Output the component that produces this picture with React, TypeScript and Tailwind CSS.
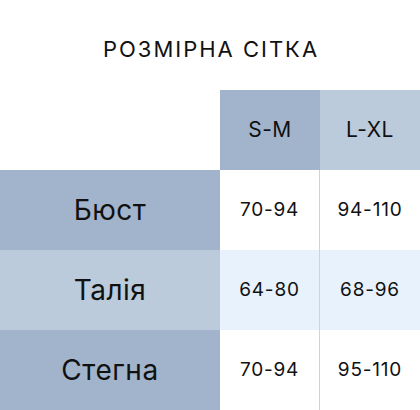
const rows = [
  { label: "Бюст", sm: "70-94", lxl: "94-110", tint: false },
  { label: "Талія", sm: "64-80", lxl: "68-96", tint: true },
  { label: "Стегна", sm: "70-94", lxl: "95-110", tint: false },
];

export default function App() {
  return (
    <div className="w-[420px] h-[410px] bg-white text-[#111] overflow-hidden" style={{ fontFamily: '"Inter", "Noto Sans", sans-serif' }}>
      <div className="h-[90px] flex items-center justify-center pt-[8px] pl-[2px]">
        <h1 className="text-[22px] font-normal tracking-[2px] leading-none">РОЗМІРНА СІТКА</h1>
      </div>

      <div className="grid grid-cols-[220px_100px_100px]">
        <div className="h-[80px] bg-white" />
        <div className="h-[80px] bg-[#a2b4cb] flex items-center justify-center text-[21px] tracking-[0.5px]">S-M</div>
        <div className="h-[80px] bg-[#bbcbdc] flex items-center justify-center text-[21px] tracking-[0.5px]">L-XL</div>

        {rows.map((r) => (
          <div key={r.label} className="contents">
            <div className={`h-[80px] flex items-center justify-center text-[28px] tracking-[0.5px] ${r.tint ? "bg-[#bbcbdc]" : "bg-[#a2b4cb]"}`}>
              {r.label}
            </div>
            <div className={`h-[80px] flex items-center justify-center text-[19px] tracking-[0.8px] border-r border-[#c9d4e1] ${r.tint ? "bg-[#e7f2fd]" : "bg-white"}`}>
              {r.sm}
            </div>
            <div className={`h-[80px] flex items-center justify-center text-[19px] tracking-[0.8px] ${r.tint ? "bg-[#e7f2fd]" : "bg-white"}`}>
              {r.lxl}
            </div>
          </div>
        ))}
      </div>
    </div>
  );
}
